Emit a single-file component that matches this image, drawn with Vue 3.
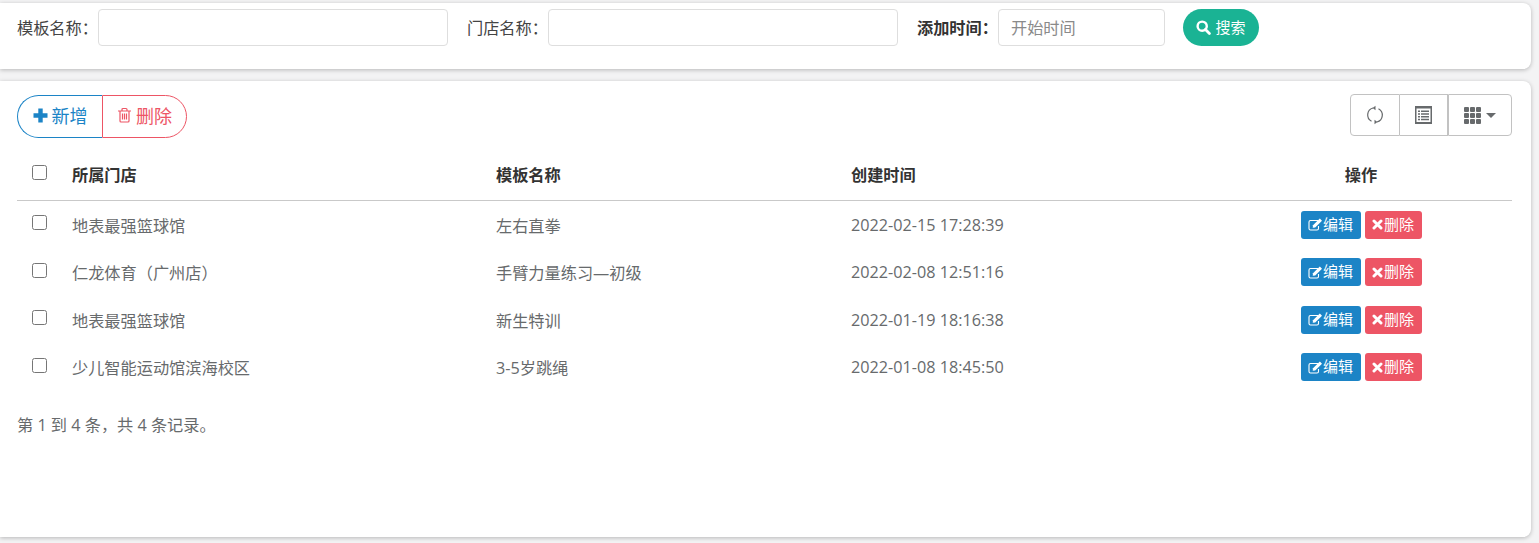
<template>
  <div class="page">
    <section class="panel search-panel">
      <div class="field">
        <label class="label">模板名称：</label>
        <input class="input wide" type="text" />
      </div>
      <div class="field">
        <label class="label">门店名称：</label>
        <input class="input wide" type="text" />
      </div>
      <div class="field last-field">
        <label class="label bold">添加时间：</label>
        <input class="input narrow" type="text" placeholder="开始时间" />
      </div>
      <button class="search-btn">
        <svg width="15" height="15" viewBox="0 0 15 15">
          <circle cx="6.200" cy="6.200" r="4.600" fill="none" stroke="#fff" stroke-width="2.400" />
          <path d="M9.500 9.500 L13.400 13.400" stroke="#fff" stroke-width="2.800" stroke-linecap="round" />
        </svg>
        搜索
      </button>
    </section>

    <section class="panel table-panel">
      <div class="toolbar">
        <div class="action-group">
          <button class="add-btn">
            <svg width="15" height="15" viewBox="0 0 15 15">
              <path d="M5.300 0.500h4.400v4.800h4.800v4.400H9.700v4.800H5.300V9.700H0.500V5.300h4.800z" fill="#1c84c6" />
            </svg>
            新增
          </button>
          <button class="del-btn">
            <svg width="15" height="16" viewBox="0 0 15 16" fill="none" stroke="#ed5565" stroke-width="1.200">
              <path d="M1 4h13M3 4v10a1 1 0 0 0 1 1h7a1 1 0 0 0 1-1V4M5 4V2.500A1 1 0 0 1 6 1.500h3a1 1 0 0 1 1 1V4M5.500 6.500v6M7.500 6.500v6M9.500 6.500v6" />
            </svg>
            删除
          </button>
        </div>
        <div class="tool-group">
          <button class="tool-btn first">
            <svg width="20" height="20" viewBox="0 0 20 20" fill="none" stroke="#676a6c" stroke-width="1.200">
              <path d="M6.500 16.300A7.200 7.200 0 0 1 8 3" />
              <path d="M13.500 3.700A7.200 7.200 0 0 1 12 17" />
              <path d="M10.500 0.800 7.600 3 10.500 5.200" fill="#676a6c" stroke="none" />
              <path d="M9.500 14.800 12.400 17 9.500 19.200" fill="#676a6c" stroke="none" />
            </svg>
          </button>
          <button class="tool-btn middle">
            <svg width="17" height="18" viewBox="0 0 17 18">
              <path d="M0 0h17v18H0z" fill="#676a6c" />
              <path d="M1.500 2.500h14v13.500h-14z" fill="#fff" />
              <path d="M3 4.500h2v1.400H3zM6 4.500h8v1.400H6zM3 7.300h2v1.400H3zM6 7.300h8v1.400H6zM3 10h2v1.400H3zM6 10h8v1.400H6zM3 12.800h2v1.400H3zM6 12.800h8v1.400H6z" fill="#676a6c" />
            </svg>
          </button>
          <button class="tool-btn last">
            <svg width="17" height="17" viewBox="0 0 17 17" fill="#676a6c">
              <rect v-for="c in cells" :key="c.k" :x="c.x" :y="c.y" width="5" height="5" rx="1" />
            </svg>
            <span class="caret"></span>
          </button>
        </div>
      </div>

      <table class="data-table">
        <thead>
          <tr>
            <th class="col-check"><input class="check head-check" type="checkbox" /></th>
            <th class="col-store">所属门店</th>
            <th class="col-name">模板名称</th>
            <th class="col-time">创建时间</th>
            <th class="col-op">操作</th>
          </tr>
        </thead>
        <tbody>
          <tr v-for="row in rows" :key="row.time">
            <td class="col-check"><input class="check" type="checkbox" /></td>
            <td>{{ row.store }}</td>
            <td>{{ row.name }}</td>
            <td>{{ row.time }}</td>
            <td class="col-op">
              <div class="op-cell">
                <button class="mini edit">
                  <svg width="15" height="13" viewBox="0 0 15 13" fill="none">
                    <path d="M10 2.500H2.500a1.500 1.500 0 0 0-1.500 1.500v6.500a1.500 1.500 0 0 0 1.500 1.500H9a1.500 1.500 0 0 0 1.500-1.500V8" stroke="#fff" stroke-width="1.100" />
                    <path d="M5 7.200 11.800 0.600 14 2.800 7.200 9.500 4.700 9.800z" fill="#fff" />
                  </svg>编辑
                </button>
                <button class="mini remove">
                  <svg width="11" height="11" viewBox="0 0 11 11">
                    <path d="M2 2 9 9M9 2 2 9" stroke="#fff" stroke-width="3" stroke-linecap="round" />
                  </svg>删除
                </button>
              </div>
            </td>
          </tr>
        </tbody>
      </table>

      <div class="summary">第 1 到 4 条，共 4 条记录。</div>
    </section>
  </div>
</template>

<script setup>
const rows = [
  { store: '地表最强篮球馆', name: '左右直拳', time: '2022-02-15 17:28:39' },
  { store: '仁龙体育（广州店）', name: '手臂力量练习—初级', time: '2022-02-08 12:51:16' },
  { store: '地表最强篮球馆', name: '新生特训', time: '2022-01-19 18:16:38' },
  { store: '少儿智能运动馆滨海校区', name: '3-5岁跳绳', time: '2022-01-08 18:45:50' }
]

const cells = []
for (let y = 0; y < 3; y++) {
  for (let x = 0; x < 3; x++) {
    cells.push({ k: `${x}-${y}`, x: x * 6, y: y * 6 })
  }
}
</script>

<style>
html, body {
  margin: 0;
  background: #f3f3f4;
}
</style>

<style scoped>
.page {
  width: 1539px;
  height: 543px;
  box-sizing: border-box;
  padding: 3px 8px 6px 0;
  display: flex;
  flex-direction: column;
  gap: 12px;
  overflow: hidden;
  font-family: "Open Sans", "Noto Sans CJK SC", sans-serif;
  font-size: 16.2px;
  color: #676a6c;
}
.panel {
  background: #fff;
  border-radius: 0 8px 8px 0;
  box-shadow: 0 1px 4px rgba(0, 0, 0, 0.25);
}
.search-panel {
  height: 66px;
  box-sizing: border-box;
  padding: 6px 0 0 17px;
  display: flex;
  align-items: flex-start;
}
.field {
  display: flex;
  align-items: center;
  height: 37px;
  margin-right: 19px;
}
.last-field {
  margin-right: 18px;
}
.label {
  width: 81px;
  color: #444;
  white-space: nowrap;
  margin-top: -2px;
}
.label.bold {
  font-weight: 700;
  color: #333;
}
.input {
  height: 37px;
  box-sizing: border-box;
  border: 1px solid #dedede;
  border-radius: 4px;
  padding: 0 12px;
  font: inherit;
  outline: none;
  background: #fff;
}
.input::placeholder {
  color: #8a8a8a;
}
.wide {
  width: 350px;
}
.narrow {
  width: 167px;
}
.search-btn {
  height: 37px;
  width: 76px;
  padding: 0 0 3px;
  border: none;
  border-radius: 19px;
  background: #1ab394;
  color: #fff;
  font-family: inherit;
  font-size: 15px;
  display: flex;
  align-items: center;
  justify-content: center;
  gap: 4px;
}
.search-btn svg {
  margin-top: 2px;
}
.table-panel {
  flex: 1;
  box-sizing: border-box;
  padding: 13px 19px 0 17px;
}
.toolbar {
  display: flex;
  justify-content: space-between;
  align-items: flex-start;
  margin-bottom: 13px;
}
.action-group {
  display: flex;
  height: 43px;
  margin-top: 1px;
}
.add-btn,
.del-btn {
  box-sizing: border-box;
  height: 43px;
  background: #fff;
  font-family: inherit;
  font-size: 18px;
  display: flex;
  align-items: center;
  justify-content: center;
  gap: 4px;
  padding: 0 0 3px;
}
.add-btn {
  width: 85px;
  color: #1c84c6;
  border: 1px solid #1c84c6;
  border-right: none;
  border-radius: 22px 0 0 22px;
}
.del-btn {
  width: 85px;
  color: #ed5565;
  border: 1px solid #ed5565;
  border-radius: 0 22px 22px 0;
}
.tool-group {
  display: flex;
  height: 42px;
}
.tool-btn {
  box-sizing: border-box;
  height: 42px;
  background: #fff;
  border: 1px solid #c2c2c2;
  border-left: none;
  display: flex;
  align-items: center;
  justify-content: center;
  gap: 5px;
  padding: 0;
}
.tool-btn.first {
  width: 50px;
  border-left: 1px solid #c2c2c2;
  border-radius: 4px 0 0 4px;
}
.tool-btn.middle {
  width: 48px;
}
.tool-btn.last {
  width: 64px;
  border-left: 1px solid #c2c2c2;
  border-radius: 0 4px 4px 0;
}
.caret {
  width: 0;
  height: 0;
  border-left: 5px solid transparent;
  border-right: 5px solid transparent;
  border-top: 5px solid #676a6c;
}
.data-table {
  width: 1495px;
  border-collapse: collapse;
  table-layout: fixed;
}
.data-table th {
  height: 45px;
  padding: 0 0 4px;
  text-align: left;
  font-weight: 700;
  color: #333;
  border-bottom: 1px solid #c9c9c9;
}
.data-table td {
  height: 47.5px;
  padding: 0;
}
.col-check {
  width: 55px;
}
.col-store {
  width: 424px;
}
.col-name {
  width: 355px;
}
.col-time {
  width: 354px;
}
.data-table .col-op {
  text-align: center;
  padding-left: 5px;
}
.check {
  display: block;
  width: 15px;
  height: 15px;
  margin: 0 0 4px 15px;
}
.head-check {
  margin-bottom: 2px;
}
.op-cell {
  display: flex;
  justify-content: center;
  gap: 4px;
}
.mini {
  height: 28px;
  border: none;
  border-radius: 3px;
  color: #fff;
  font-family: inherit;
  font-size: 15px;
  padding: 0 0 3px;
  display: flex;
  align-items: center;
  justify-content: center;
}
.mini svg {
  margin-top: 3px;
}
.edit {
  width: 60px;
  background: #1c84c6;
}
.remove {
  width: 57px;
  background: #ed5565;
}
.remove svg {
  margin-right: 1px;
}
.summary {
  margin-top: 22px;
  line-height: 24px;
}
</style>
